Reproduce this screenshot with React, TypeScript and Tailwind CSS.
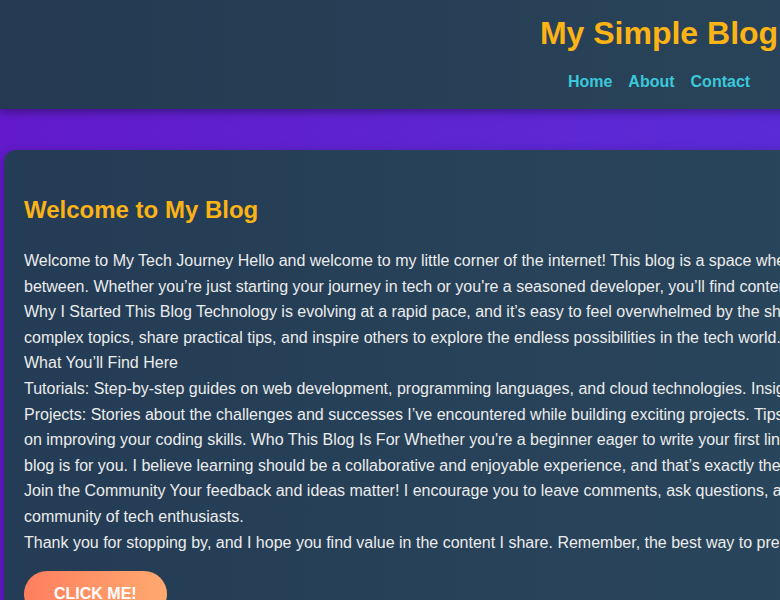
import React from "react";

const lines = [
  "Welcome to My Tech Journey Hello and welcome to my little corner of the internet! This blog is a space where I share my thoughts, experiences, and lessons learned along the way in tech and everything in",
  "between. Whether you’re just starting your journey in tech or you're a seasoned developer, you’ll find content here that inspires, educates, and hopefully entertains.",
  "Why I Started This Blog Technology is evolving at a rapid pace, and it’s easy to feel overwhelmed by the sheer volume of information out there. I started this blog to simplify",
  "complex topics, share practical tips, and inspire others to explore the endless possibilities in the tech world.",
  "What You’ll Find Here",
  "Tutorials: Step-by-step guides on web development, programming languages, and cloud technologies. Insights: My thoughts on the latest trends and tools in the industry.",
  "Projects: Stories about the challenges and successes I’ve encountered while building exciting projects. Tips and Tricks: Practical advice",
  "on improving your coding skills. Who This Blog Is For Whether you're a beginner eager to write your first line of code or a pro looking for fresh ideas, this",
  "blog is for you. I believe learning should be a collaborative and enjoyable experience, and that’s exactly the vibe I want to create here.",
  "Join the Community Your feedback and ideas matter! I encourage you to leave comments, ask questions, and share your own experiences. Let’s build a",
  "community of tech enthusiasts.",
  "Thank you for stopping by, and I hope you find value in the content I share. Remember, the best way to predict the future is to create it!",
];

export default function App() {
  return (
    <div className="w-[780px] h-[600px] overflow-hidden bg-linear-to-r from-[#621acb] to-[#5a2bd7] font-['Liberation_Sans',Arial,sans-serif]">
      <div className="w-[1318px]">
        <header className="relative z-10 bg-linear-to-r from-[#253a52] to-[#2b4a5e] pt-[15px] pb-[18px] text-center shadow-[0_3px_8px_rgba(0,0,0,0.35)]">
          <h1 className="text-[32px] leading-[36px] font-bold text-[#fcb315]">My Simple Blog</h1>
          <nav className="mt-[22px] flex justify-center gap-4 text-[16px] leading-[18px] font-bold text-[#3bc8da]">
            <a href="#">Home</a>
            <a href="#">About</a>
            <a href="#">Contact</a>
          </nav>
        </header>
        <main className="pt-[41px] pl-[4px] pr-[4px]">
          <section className="rounded-[12px] bg-linear-to-r from-[#243c55] to-[#2c4b5f] px-5 pt-[46px] pb-8 shadow-[0_4px_12px_rgba(0,0,0,0.3)]">
            <h2 className="text-[24px] leading-[28px] font-bold text-[#fcb315]">Welcome to My Blog</h2>
            <p className="mt-[24px] text-[16px] leading-[25.6px] text-[#ececec]">
              {lines.map((l, i) => (
                <span key={i} className="block whitespace-nowrap">
                  {l}
                </span>
              ))}
            </p>
            <button className="mt-[16px] rounded-full bg-linear-to-r from-[#ff7e5f] to-[#ffa96f] px-[30px] py-[10px] text-[16px] leading-[25.6px] font-bold uppercase text-white">
              Click Me!
            </button>
          </section>
        </main>
      </div>
    </div>
  );
}
